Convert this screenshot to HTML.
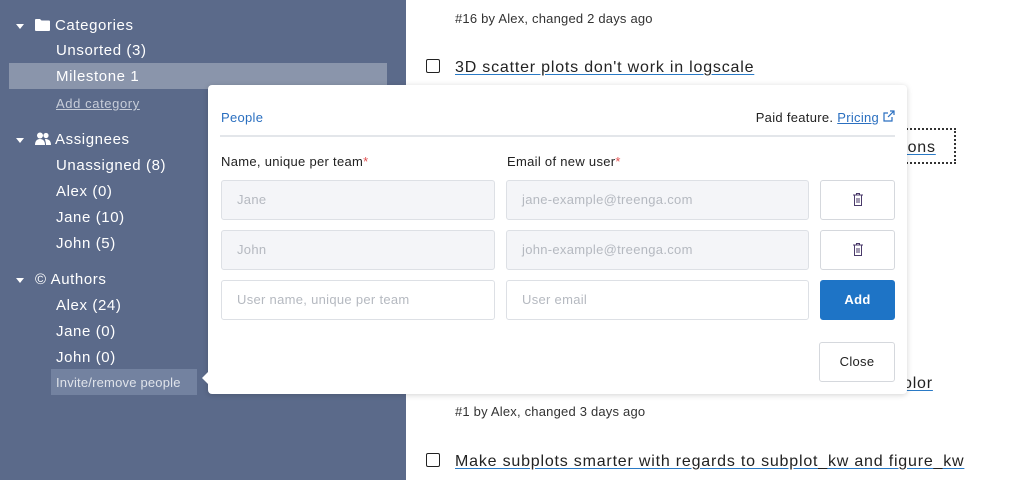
<!DOCTYPE html>
<html><head><meta charset="utf-8"><style>
*{box-sizing:border-box;margin:0;padding:0}
body{width:1031px;height:480px;overflow:hidden;background:#fff;font-family:"Liberation Sans",sans-serif;position:relative}
#side{position:absolute;left:0;top:0;width:406px;height:480px;background:#5b6a8a;color:#fff;font-size:15px;letter-spacing:0.6px}
.h{position:absolute;left:16px;font-size:15px}
.h .tri{display:inline-block;width:0;height:0;border-left:4px solid transparent;border-right:4px solid transparent;border-top:5px solid #fff;margin-right:11px;vertical-align:middle}
.i{position:absolute;left:56px}
.sel{position:absolute;left:9px;top:63px;width:378px;height:26px;background:#8a95ab}
.meta{position:absolute;left:455px;font-size:13px;color:#333;letter-spacing:0.2px}
.t{position:absolute;left:455px;font-size:16px;color:#222;text-decoration:underline;text-decoration-color:#2a7ac6;text-underline-offset:2px;letter-spacing:0.8px}
.cb{position:absolute;left:426px;width:14px;height:14px;border:1.5px solid #222;border-radius:2px}
#pop{position:absolute;left:208px;top:85px;width:699px;height:309px;background:#fff;border-radius:4px;box-shadow:0 1px 6px rgba(0,0,0,.18);font-size:13px;color:#222;letter-spacing:0.3px}
#pop:before{content:"";position:absolute;left:-6px;top:287px;border-top:6px solid transparent;border-bottom:6px solid transparent;border-right:6px solid #fff}
.in{position:absolute;height:40px;border:1px solid #dde0e5;border-radius:3px;padding-left:15px;line-height:38px;color:#b5b9c0;font-size:13px}
.g{background:#f4f5f8}
.btn{position:absolute;left:612px;width:75px;height:40px;border:1px solid #d5d8dd;border-radius:3px;text-align:center;line-height:38px;background:#fff}
.star{color:#e05050}
</style></head><body>
<div id="side">
<div class="h" style="top:17px"><span class="tri"></span><svg width="15" height="13" viewBox="0 0 15 13" style="vertical-align:-1px;margin-right:5px"><path d="M0 2a1 1 0 0 1 1-1h4l1.5 1.5H14a1 1 0 0 1 1 1V12a1 1 0 0 1-1 1H1a1 1 0 0 1-1-1z" fill="#fff"/></svg>Categories</div>
<div class="i" style="top:42px">Unsorted (3)</div>
<div class="sel"></div>
<div class="i" style="top:68px">Milestone 1</div>
<div class="i" style="top:96px;font-size:13px;color:#c7cdd9;text-decoration:underline">Add category</div>
<div class="h" style="top:131px"><span class="tri"></span><svg width="16" height="13" viewBox="0 0 16 13" style="vertical-align:-1px;margin-right:4px"><circle cx="5" cy="3.5" r="3" fill="#fff"/><path d="M0 13c0-4 2-6 5-6s5 2 5 6z" fill="#fff"/><circle cx="11" cy="3.5" r="2.6" fill="#fff"/><path d="M10 7c3 0 6 1 6 6h-5c0-3-1-5-1-6z" fill="#fff"/></svg>Assignees</div>
<div class="i" style="top:157px">Unassigned (8)</div>
<div class="i" style="top:183px">Alex (0)</div>
<div class="i" style="top:209px">Jane (10)</div>
<div class="i" style="top:235px">John (5)</div>
<div class="h" style="top:271px"><span class="tri"></span>© Authors</div>
<div class="i" style="top:297px">Alex (24)</div>
<div class="i" style="top:323px">Jane (0)</div>
<div class="i" style="top:349px">John (0)</div>
<div style="position:absolute;left:51px;top:369px;width:146px;height:26px;background:#7382a0;color:#dfe3ea;font-size:13px;line-height:28px;padding-left:5px;letter-spacing:0.2px">Invite/remove people</div>
</div>
<div class="meta" style="top:11px">#16 by Alex, changed 2 days ago</div>
<div class="cb" style="top:59px"></div><div class="t" style="top:59px">3D scatter plots don't work in logscale</div>
<div style="position:absolute;left:893px;top:128px;width:63px;height:36px;border:2px dotted #333"></div>
<div class="t" style="top:139px;left:898px">tions</div>
<div class="t" style="top:375px;left:903px">olor</div>
<div class="meta" style="top:404px">#1 by Alex, changed 3 days ago</div>
<div class="cb" style="top:453px"></div><div class="t" style="top:453px">Make subplots smarter with regards to subplot_kw and figure_kw</div>
<div id="pop">
<div style="position:absolute;left:13px;top:25px;color:#2a6fc0;font-size:13px">People</div>
<div style="position:absolute;right:12px;top:25px;font-size:13px">Paid feature. <span style="color:#2a6fc0;text-decoration:underline">Pricing</span> <svg width="12" height="12" viewBox="0 0 12 12" style="vertical-align:0"><path d="M9 7v4H1V3h4M7 1h4v4M11 1L5 7" stroke="#2a6fc0" stroke-width="1.2" fill="none"/></svg></div>
<div style="position:absolute;left:12px;top:50px;width:675px;height:2px;background:#e3e6ea"></div>
<div style="position:absolute;left:13px;top:69px">Name, unique per team<span class="star">*</span></div>
<div style="position:absolute;left:299px;top:69px">Email of new user<span class="star">*</span></div>
<div class="in g" style="left:13px;top:95px;width:274px">Jane</div>
<div class="in g" style="left:298px;top:95px;width:303px">jane-example@treenga.com</div>
<div class="btn" style="top:95px"><svg width="10" height="13" viewBox="0 0 10 13" style="vertical-align:-2px"><path d="M0 2h10M3.5 2V.5h3V2M1.5 2.5v10h7v-10M4 5v5M6 5v5" stroke="#4a3a6a" stroke-width="1" fill="none"/></svg></div>
<div class="in g" style="left:13px;top:145px;width:274px">John</div>
<div class="in g" style="left:298px;top:145px;width:303px">john-example@treenga.com</div>
<div class="btn" style="top:145px"><svg width="10" height="13" viewBox="0 0 10 13" style="vertical-align:-2px"><path d="M0 2h10M3.5 2V.5h3V2M1.5 2.5v10h7v-10M4 5v5M6 5v5" stroke="#4a3a6a" stroke-width="1" fill="none"/></svg></div>
<div class="in" style="left:13px;top:195px;width:274px">User name, unique per team</div>
<div class="in" style="left:298px;top:195px;width:303px">User email</div>
<div class="btn" style="top:195px;background:#1e74c6;border-color:#1e74c6;color:#fff;font-weight:bold">Add</div>
<div class="btn" style="top:257px;left:611px;width:76px">Close</div>
</div>
</body></html>
